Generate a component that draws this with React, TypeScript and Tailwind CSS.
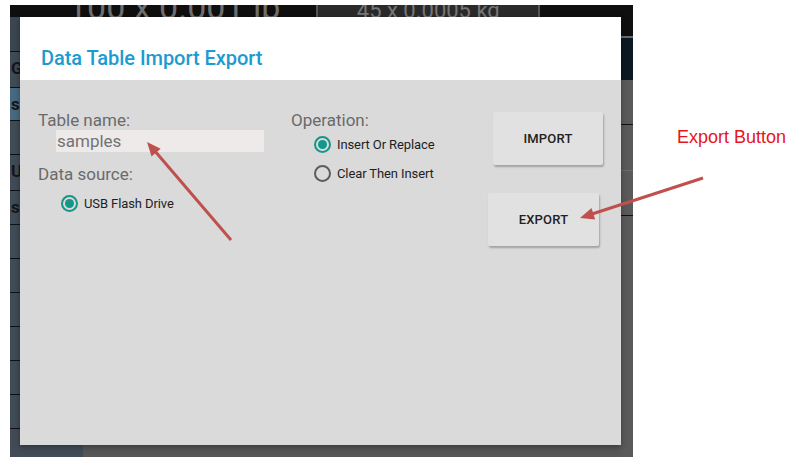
import React from 'react';

// rows of the app sitting behind the modal (only the left edge peeks out)
const sideRows = [
  { h: 'h-[35px]', bg: 'bg-[#3b4650]', ch: '' },
  { h: 'h-[36px]', bg: 'bg-[#3f4b56]', ch: 'G' },
  { h: 'h-[33px]', bg: 'bg-[#476a80]', ch: 's' },
  { h: 'h-[34px]', bg: 'bg-[#3f4b56]', ch: '' },
  { h: 'h-[36px]', bg: 'bg-[#3f4b56]', ch: 'U' },
  { h: 'h-[34px]', bg: 'bg-[#3f4b56]', ch: 's' },
  { h: 'h-[34px]', bg: 'bg-[#3f4b56]', ch: '' },
  { h: 'h-[34px]', bg: 'bg-[#3f4b56]', ch: '' },
  { h: 'h-[34px]', bg: 'bg-[#3f4b56]', ch: '' },
  { h: 'h-[34px]', bg: 'bg-[#3f4b56]', ch: '' },
  { h: 'h-[34px]', bg: 'bg-[#3f4b56]', ch: '' },
  { h: 'h-[34px]', bg: 'bg-[#3f4b56]', ch: '' },
];

function Radio({ checked, label }: { checked: boolean; label: string }) {
  return (
    <div className="flex items-center h-[29px]">
      <div
        className={`w-[17px] h-[17px] rounded-full border-2 flex items-center justify-center ${
          checked ? 'border-[#13978a]' : 'border-[#5c5c5c]'
        }`}
      >
        {checked && <div className="w-[9px] h-[9px] rounded-full bg-[#13978a]" />}
      </div>
      <span className="ml-[6px] text-[13px] text-[#1e1e1e] tracking-[-0.1px]">{label}</span>
    </div>
  );
}

function DialogButton({ label, className }: { label: string; className: string }) {
  return (
    <button
      className={`bg-[#e1e1e1] rounded-[2px] shadow-[1px_2px_2px_rgba(0,0,0,0.25)] text-[13px] font-medium text-[#222] tracking-[0.2px] ${className}`}
    >
      {label}
    </button>
  );
}

export default function App() {
  return (
    <div className="relative w-[800px] h-[463px] bg-white overflow-hidden" style={{ fontFamily: 'Roboto, "Noto Sans", sans-serif' }}>
      {/* tablet screen behind the modal */}
      <div className="ml-[10px] mt-[5px] w-[623px] h-[452px] bg-[#575757] flex flex-col overflow-hidden">
        <div className="h-[12px] shrink-0 bg-[#0f0f0f] flex items-end overflow-hidden">
          <span className="ml-[58px] text-[34px] leading-none text-[#6f6f6f] translate-y-[7px] whitespace-nowrap">100 x 0.001 lb</span>
          <div className="ml-[36px] w-[224px] h-full bg-[#2a2a2a] border-x-2 border-[#555] flex items-end justify-center">
            <span className="text-[22px] leading-none text-[#777] translate-y-[5px] whitespace-nowrap">45 x 0.0005 kg</span>
          </div>
        </div>
        <div className="flex flex-1">
          <div className="w-[73px] flex flex-col">
            {sideRows.map((r, i) => (
              <div key={i} className={`${r.h} ${r.bg} border-b border-[#111] shrink-0 text-[17px] font-bold text-[#161616] pl-[1px] leading-[32px]`}>
                {r.ch}
              </div>
            ))}
            <div className="flex-1 bg-[#434c56]" />
          </div>
          <div className="flex-1" />
          <div className="w-[13px] flex flex-col">
            <div className="h-[21px] bg-[#0f0f0f] border-b-2 border-[#6a6a6a]" />
            <div className="h-[42px] bg-[#0c1923]" />
            <div className="h-[45px] bg-[#5a5a5a] border-b border-[#111]" />
            <div className="h-[46px] bg-[#5a5a5a] border-b border-[#6c6c6c]" />
            <div className="h-[45px] bg-[#5a5a5a] border-b border-[#111]" />
            <div className="flex-1 bg-[#5a5a5a]" />
          </div>
        </div>
      </div>

      {/* Data Table Import Export dialog */}
      <div className="absolute left-[20px] top-[17px] w-[601px] h-[428px] flex flex-col shadow-[0_2px_6px_rgba(0,0,0,0.35)]">
        <div className="h-[63px] bg-white pl-[21px] pt-[29px]">
          <h1 className="text-[20px] leading-[24px] font-medium text-[#1c9bd0] tracking-[-0.05px]">Data Table Import Export</h1>
        </div>
        <div className="flex-1 bg-[#dadada] flex pl-[18px] pt-[30px]">
          <div className="w-[253px] flex flex-col">
            <div className="text-[17px] leading-[20px] text-[#6a6a6a]">Table name:</div>
            <div className="ml-[18px] w-[208px] h-[22px] bg-[#eeeaea] pl-[1px] text-[17px] leading-[22px] text-[#727272]">samples</div>
            <div className="mt-[12px] text-[17px] leading-[20px] text-[#6a6a6a]">Data source:</div>
            <div className="ml-[23px] mt-[5px]">
              <Radio checked label="USB Flash Drive" />
            </div>
          </div>
          <div className="w-[197px] flex flex-col">
            <div className="text-[17px] leading-[20px] text-[#6a6a6a]">Operation:</div>
            <div className="ml-[23px]">
              <Radio checked label="Insert Or Replace" />
              <Radio checked={false} label="Clear Then Insert" />
            </div>
          </div>
          <div className="flex flex-col">
            <DialogButton label="IMPORT" className="ml-[5px] mt-[2px] w-[110px] h-[53px]" />
            <DialogButton label="EXPORT" className="mt-[28px] w-[111px] h-[53px]" />
          </div>
        </div>
      </div>

      <span className="absolute left-[677px] top-[124px] text-[18px] text-[#e8141c]" style={{ fontFamily: '"Liberation Sans", Arial, sans-serif' }}>
        Export Button
      </span>

      {/* callout arrows */}
      <svg className="absolute left-0 top-0" width="800" height="463" viewBox="0 0 800 463">
        <line x1="231" y1="240" x2="154" y2="150" stroke="#c0504d" strokeWidth="3" />
        <polygon points="147,142 160.7,148.7 151.5,156.5" fill="#c0504d" />
        <line x1="703" y1="178" x2="592" y2="214" stroke="#c0504d" strokeWidth="3" />
        <polygon points="580,218 591.5,208 595.2,219.4" fill="#c0504d" />
      </svg>
    </div>
  );
}
